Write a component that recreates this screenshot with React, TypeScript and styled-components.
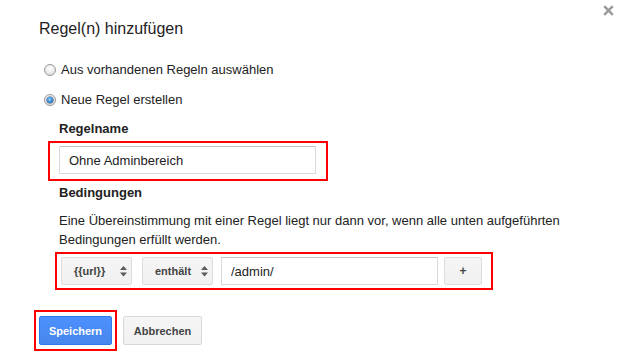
import React from "react";
import styled, { createGlobalStyle, css } from "styled-components";

const GlobalStyle = createGlobalStyle`
  html, body { margin: 0; padding: 0; background: #fff; }
  body { font-family: "Liberation Sans", Arial, sans-serif; color: #222; }
  * { box-sizing: border-box; }
`;

const Dialog = styled.div`
  position: relative;
  width: 626px;
  height: 354px;
  padding: 19px 0 0 39px;
  display: flex;
  flex-direction: column;
  align-items: flex-start;
  background: #fff;
  overflow: hidden;
`;

const Close = styled.button`
  position: absolute;
  top: 5px;
  right: 12px;
  width: 11px;
  height: 11px;
  padding: 0;
  border: 0;
  background: none;
  display: flex;
  cursor: pointer;
`;

const Title = styled.h1`
  margin: 0;
  font-size: 16px;
  font-weight: normal;
  line-height: 20px;
  color: #222;
`;

const RadioList = styled.div`
  margin: 23px 0 0 5px;
  display: flex;
  flex-direction: column;
  gap: 14px;
`;

const RadioRow = styled.label`
  display: flex;
  align-items: center;
  gap: 5px;
  height: 16px;
  font-size: 13px;
  line-height: 16px;
  color: #222;
`;

const Radio = styled.span<{ $checked?: boolean }>`
  position: relative;
  width: 12px;
  height: 12px;
  border-radius: 50%;
  border: 1px solid #9a9a9a;
  background: radial-gradient(circle at 50% 35%, #ffffff 0%, #eeeeee 45%, #d2d2d2 100%);
  flex: none;
  ${(p) =>
    p.$checked &&
    css`
      &::after {
        content: "";
        position: absolute;
        left: 2px;
        top: 2px;
        width: 6px;
        height: 6px;
        border-radius: 50%;
        background: radial-gradient(circle at 45% 40%, #a8dcff 0%, #3d8fd8 45%, #0f4f98 100%);
        box-shadow: 0 0 0 0.5px #173f6e;
      }
    `}
`;

const Form = styled.div`
  margin: 13px 0 0 20px;
  display: flex;
  flex-direction: column;
  align-items: flex-start;
`;

const Label = styled.div`
  font-size: 13px;
  font-weight: bold;
  line-height: 16px;
  color: #222;
`;

const Highlight = styled.div<{ $m: string; $p: string }>`
  border: 2px solid #f00;
  margin: ${(p) => p.$m};
  padding: ${(p) => p.$p};
`;

const TextInput = styled.input<{ $w: number }>`
  width: ${(p) => p.$w}px;
  height: 28px;
  margin: 0;
  padding: 0 0 0 9px;
  border: 1px solid #d9d9d9;
  border-top-color: #c4c4c4;
  border-radius: 1px;
  font-family: "Liberation Sans", Arial, sans-serif;
  font-size: 13px;
  color: #222;
  background: #fff;
  outline: none;
`;

const Description = styled.p`
  margin: 10px 0 0 0;
  width: 540px;
  font-size: 13px;
  line-height: 19px;
  color: #222;
`;

const ConditionRow = styled.div`
  display: flex;
  align-items: center;
`;

const SelectBox = styled.div<{ $mr: number }>`
  width: 71px;
  height: 28px;
  margin-right: ${(p) => p.$mr}px;
  padding: 0 4px 0 12px;
  display: flex;
  align-items: center;
  justify-content: space-between;
  border: 1px solid #dcdcdc;
  border-radius: 2px;
  background: linear-gradient(#f5f5f5, #f1f1f1);
  font-size: 11px;
  font-weight: bold;
  color: #444;
`;

const PlusButton = styled.button`
  width: 38px;
  height: 28px;
  margin: 0 0 0 6px;
  padding: 0;
  border: 1px solid #dcdcdc;
  border-radius: 2px;
  background: linear-gradient(#f5f5f5, #f1f1f1);
  font-family: "Liberation Sans", Arial, sans-serif;
  font-size: 12px;
  font-weight: bold;
  color: #444;
`;

const Footer = styled.div`
  margin: 20px 0 0 -5px;
  display: flex;
  align-items: center;
  gap: 6px;
`;

const Button = styled.button<{ $primary?: boolean; $w: number }>`
  width: ${(p) => p.$w}px;
  height: 29px;
  padding: 0;
  border-radius: 2px;
  font-family: "Liberation Sans", Arial, sans-serif;
  font-size: 11px;
  font-weight: bold;
  cursor: pointer;
  ${(p) =>
    p.$primary
      ? css`
          border: 1px solid #3079ed;
          background: linear-gradient(#4d90fe, #4787ed);
          color: #fff;
        `
      : css`
          border: 1px solid #d8d8d8;
          background: linear-gradient(#f5f5f5, #f1f1f1);
          color: #444;
        `}
`;

const SelectArrows = () => (
  <svg width="7" height="12" viewBox="0 0 7 12" aria-hidden="true">
    <path d="M0 5 L3.5 1 L7 5 Z" fill="#5a5a5a" />
    <path d="M0 7.5 L3.5 11.5 L7 7.5 Z" fill="#5a5a5a" />
  </svg>
);

export default function App() {
  return (
    <>
      <GlobalStyle />
      <Dialog>
        <Close aria-label="Schließen">
          <svg width="11" height="11" viewBox="0 0 11 11">
            <path d="M1.2 1.2 L9.8 9.8 M9.8 1.2 L1.2 9.8" stroke="#9a9a9a" strokeWidth="2.4" />
          </svg>
        </Close>
        <Title>Regel(n) hinzufügen</Title>
        <RadioList>
          <RadioRow>
            <Radio />
            Aus vorhandenen Regeln auswählen
          </RadioRow>
          <RadioRow>
            <Radio $checked />
            Neue Regel erstellen
          </RadioRow>
        </RadioList>
        <Form>
          <Label>Regelname</Label>
          <Highlight $m="4px 0 4px -11px" $p="3px 10px 5px 9px">
            <TextInput $w={257} defaultValue="Ohne Adminbereich" />
          </Highlight>
          <Label>Bedingungen</Label>
          <Description>
            Eine Übereinstimmung mit einer Regel liegt nur dann vor, wenn alle unten aufgeführten
            Bedingungen erfüllt werden.
          </Description>
          <Highlight $m="3px 0 0 -4px" $p="3px 9px 3px 4px">
            <ConditionRow>
              <SelectBox $mr={10}>
                <span>{"{{url}}"}</span>
                <SelectArrows />
              </SelectBox>
              <SelectBox $mr={8}>
                <span>enthält</span>
                <SelectArrows />
              </SelectBox>
              <TextInput $w={217} defaultValue="/admin/" />
              <PlusButton>+</PlusButton>
            </ConditionRow>
          </Highlight>
        </Form>
        <Footer>
          <Highlight $m="0" $p="4px 3px">
            <Button $primary $w={73}>Speichern</Button>
          </Highlight>
          <Button $w={79}>Abbrechen</Button>
        </Footer>
      </Dialog>
    </>
  );
}
